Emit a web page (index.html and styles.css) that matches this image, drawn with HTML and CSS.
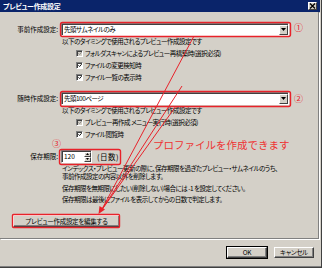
FILE: index.html
```html
<!DOCTYPE html>
<html lang="ja">
<head>
<meta charset="utf-8">
<link rel="stylesheet" href="styles.css">
</head>
<body>
<div class="window">
  <div class="titlebar">
    <span class="title">プレビュー作成設定</span>
    <span class="close"><svg width="7" height="6" viewBox="0 0 7 6"><path d="M1 0.5 L6 5.5 M6 0.5 L1 5.5" stroke="#000" stroke-width="1.3"/></svg></span>
  </div>
  <div class="panel">
    <div class="row r1">
      <span class="lbl">事前作成設定:</span>
      <div class="combo"><span class="val">先頭サムネイルのみ</span><span class="drop"><svg width="5" height="3" viewBox="0 0 5 3"><path d="M0 0 H5 L2.5 3 Z" fill="#000"/></svg></span></div>
    </div>
    <div class="note">以下のタイミングで使用されるプレビュー作成設定です</div>
    <div class="check disabled"><span class="box"><svg width="5" height="5" viewBox="0 0 5 5"><path d="M0.5 2.2 L2 3.8 L4.6 0.8" fill="none" stroke="#808080" stroke-width="1"/></svg></span>フォルダスキャンによるプレビュー再構築時(選択必須)</div>
    <div class="check"><span class="box"><svg width="5" height="5" viewBox="0 0 5 5"><path d="M0.5 2.2 L2 3.8 L4.6 0.8" fill="none" stroke="#000" stroke-width="1.1"/></svg></span>ファイルの変更検知時</div>
    <div class="check"><span class="box"><svg width="5" height="5" viewBox="0 0 5 5"><path d="M0.5 2.2 L2 3.8 L4.6 0.8" fill="none" stroke="#000" stroke-width="1.1"/></svg></span>ファイル一覧の表示時</div>

    <div class="row r2">
      <span class="lbl">随時作成設定:</span>
      <div class="combo"><span class="val">先頭100ページ</span><span class="drop"><svg width="5" height="3" viewBox="0 0 5 3"><path d="M0 0 H5 L2.5 3 Z" fill="#000"/></svg></span></div>
    </div>
    <div class="note">以下のタイミングで使用されるプレビュー作成設定です</div>
    <div class="check disabled"><span class="box"><svg width="5" height="5" viewBox="0 0 5 5"><path d="M0.5 2.2 L2 3.8 L4.6 0.8" fill="none" stroke="#808080" stroke-width="1"/></svg></span>プレビュー再作成 メニュー実行時(選択必須)</div>
    <div class="check"><span class="box"><svg width="5" height="5" viewBox="0 0 5 5"><path d="M0.5 2.2 L2 3.8 L4.6 0.8" fill="none" stroke="#000" stroke-width="1.1"/></svg></span>ファイル閲覧時</div>

    <div class="row r3">
      <span class="lbl">保存期限:</span>
      <div class="spin"><span class="val">120</span><span class="arrows"><span class="up"><svg width="3" height="2" viewBox="0 0 3 2"><path d="M0 2 H3 L1.5 0 Z" fill="#000"/></svg></span><span class="down"><svg width="3" height="2" viewBox="0 0 3 2"><path d="M0 0 H3 L1.5 2 Z" fill="#000"/></svg></span></span></div>
      <span class="unit">(日数)</span>
    </div>
    <p class="para p1">インデックス・プレビュー更新の際に、保存期限を過ぎたプレビュー・サムネイルのうち、<br>事前作成設定の内容以外を削除します。</p>
    <p class="para p2">保存期限を無期限にしたい(削除しない)場合には -1 を設定してください。</p>
    <p class="para p3">保存期限は最後にファイルを表示してからの日数で判定します。</p>
    <button class="btn edit">プレビュー作成設定を編集する</button>
  </div>
  <div class="footer">
    <button class="btn default">OK</button>
    <button class="btn">キャンセル</button>
  </div>

  <svg class="annot" width="322" height="268" viewBox="0 0 322 268">
    <g fill="none" stroke="#e8222a" stroke-width="1.4">
      <rect x="60.5" y="22.5" width="230" height="14" rx="2"/>
      <rect x="60.5" y="91.5" width="230" height="15" rx="2"/>
      <rect x="59.5" y="149.5" width="61" height="15" rx="2"/>
      <rect x="12.5" y="214.5" width="107" height="13" rx="1"/>
    </g>
    <g stroke="#e8222a" stroke-width="1">
      <line x1="194" y1="36" x2="101" y2="211"/>
      <line x1="182" y1="86" x2="101" y2="211"/>
      <line x1="176" y1="106" x2="101" y2="211"/>
    </g>
    <path d="M98.5 214 L99.5 206 L105 209.5 Z" fill="#e8222a"/>
  </svg>
  <span class="num n1">①</span>
  <span class="num n2">②</span>
  <span class="num n3">③</span>
  <span class="callout">プロファイルを作成できます</span>
</div>
</body>
</html>
```

FILE: styles.css
```css
html, body {
  margin: 0;
  padding: 0;
  background: #d4d0c8;
}
body {
  width: 322px;
  height: 268px;
  overflow: hidden;
  font-family: "Noto Sans CJK JP", "Noto Sans", sans-serif;
  font-size: 6.5px;
  letter-spacing: -0.5px;
  color: #000;
}
.window {
  position: relative;
  width: 322px;
  height: 268px;
  box-sizing: border-box;
  border-right: 1px solid #404040;
  border-bottom: 1px solid #404040;
  display: flex;
  flex-direction: column;
  background: #d4d0c8;
  font-feature-settings: "palt";
}
.titlebar {
  height: 12px;
  flex: 0 0 12px;
  background: #0a246a;
  display: flex;
  align-items: center;
  justify-content: space-between;
  padding: 0 3px 0 3px;
  margin-right: 1px;
}
.title {
  color: #fff;
  font-weight: bold;
  font-size: 7px;
  letter-spacing: -0.3px;
  line-height: 12px;
}
.close {
  width: 9px;
  height: 8px;
  box-sizing: border-box;
  background: #d4d0c8;
  border: 1px solid;
  border-color: #fff #404040 #404040 #fff;
  display: flex;
  align-items: center;
  justify-content: center;
}
.close svg { display: block; }
.panel {
  flex: 0 0 227px;
  height: 227px;
  box-sizing: border-box;
  margin-right: 2px;
  border-right: 1px solid #808080;
  border-bottom: 1px solid #808080;
  box-shadow: 1px 1px 0 #fff;
  display: flex;
  flex-direction: column;
  align-items: flex-start;
}
.row {
  display: flex;
  align-items: center;
  height: 13px;
}
.r1 { margin-top: 11px; }
.r2 { margin-top: 9px; }
.r3 { margin-top: 10px; }
.lbl {
  width: 58px;
  text-align: right;
  white-space: nowrap;
  line-height: 13px;
  letter-spacing: 0;
}
.combo {
  margin-left: 3px;
  width: 228px;
  height: 13px;
  box-sizing: border-box;
  background: #fff;
  border: 1px solid;
  border-color: #808080 #fff #fff #808080;
  box-shadow: inset 1px 1px 0 #404040;
  display: flex;
  align-items: center;
  justify-content: space-between;
  padding-left: 2px;
}
.val { line-height: 11px; }
.drop {
  width: 9px;
  height: 10px;
  margin-right: 0;
  box-sizing: border-box;
  background: #d4d0c8;
  border: 1px solid;
  border-color: #fff #404040 #404040 #fff;
  display: flex;
  align-items: center;
  justify-content: center;
}
.drop svg { display: block; }
.note {
  height: 11px;
  line-height: 11px;
  padding-left: 62px;
  white-space: nowrap;
}
.check {
  height: 12px;
  line-height: 12px;
  padding-left: 76px;
  display: flex;
  align-items: center;
  white-space: nowrap;
}
.check .box {
  width: 7px;
  height: 7px;
  box-sizing: border-box;
  background: #fff;
  border: 1px solid;
  border-color: #808080 #fff #fff #808080;
  box-shadow: inset 1px 1px 0 #404040;
  margin-right: 2px;
  display: flex;
  align-items: center;
  justify-content: center;
}
.check .box svg { display: block; margin: 1px 0 0 1px; }
.check.disabled .box { background: #d4d0c8; }
.spin {
  margin-left: 3px;
  width: 31px;
  height: 13px;
  box-sizing: border-box;
  background: #fff;
  border: 1px solid;
  border-color: #808080 #fff #fff #808080;
  box-shadow: inset 1px 1px 0 #404040;
  display: flex;
  align-items: center;
  justify-content: space-between;
  padding-left: 2px;
  letter-spacing: 0;
}
.arrows {
  display: flex;
  flex-direction: column;
  width: 7px;
  height: 10px;
}
.arrows span {
  flex: 1;
  box-sizing: border-box;
  background: #d4d0c8;
  border: 1px solid;
  border-color: #fff #404040 #404040 #fff;
  display: flex;
  align-items: center;
  justify-content: center;
}
.arrows svg { display: block; }
.unit {
  margin-left: 5px;
  font-size: 7.5px;
  letter-spacing: 0.5px;
  line-height: 13px;
}
.para {
  margin: 0;
  padding-left: 62px;
  line-height: 8px;
  white-space: nowrap;
}
.p1 { margin-top: 1px; }
.p2 { margin-top: 4px; }
.p3 { margin-top: 3px; }
.btn {
  font-family: inherit;
  font-size: 6.5px;
  letter-spacing: -0.3px;
  font-feature-settings: "palt";
  color: #000;
  background: #d4d0c8;
  border: 1px solid;
  border-color: #fff #404040 #404040 #fff;
  box-shadow: inset -1px -1px 0 #808080;
  padding: 0;
  margin: 0;
  line-height: 9px;
}
.edit {
  margin-top: 12px;
  margin-left: 13px;
  width: 107px;
  height: 12px;
}
.footer {
  flex: 1;
  display: flex;
  justify-content: flex-end;
  align-items: flex-start;
  gap: 7px;
  padding: 8px 7px 0 0;
  border-bottom: 1px solid #808080;
}
.footer .btn {
  width: 40px;
  height: 11px;
}
.footer .btn.default {
  outline: 1px solid #000;
  outline-offset: 0;
}
.annot {
  position: absolute;
  left: 0;
  top: 0;
  pointer-events: none;
}
.num {
  position: absolute;
  color: #e8222a;
  font-size: 9px;
  line-height: 9px;
  letter-spacing: 0;
}
.n1 { left: 294px; top: 23px; }
.n2 { left: 294px; top: 94px; }
.n3 { left: 52px; top: 139px; }
.callout {
  position: absolute;
  left: 153px;
  top: 138px;
  color: #ee3333;
  font-size: 10.5px;
  letter-spacing: 0;
  line-height: 14px;
  white-space: nowrap;
  font-feature-settings: normal;
}
```
